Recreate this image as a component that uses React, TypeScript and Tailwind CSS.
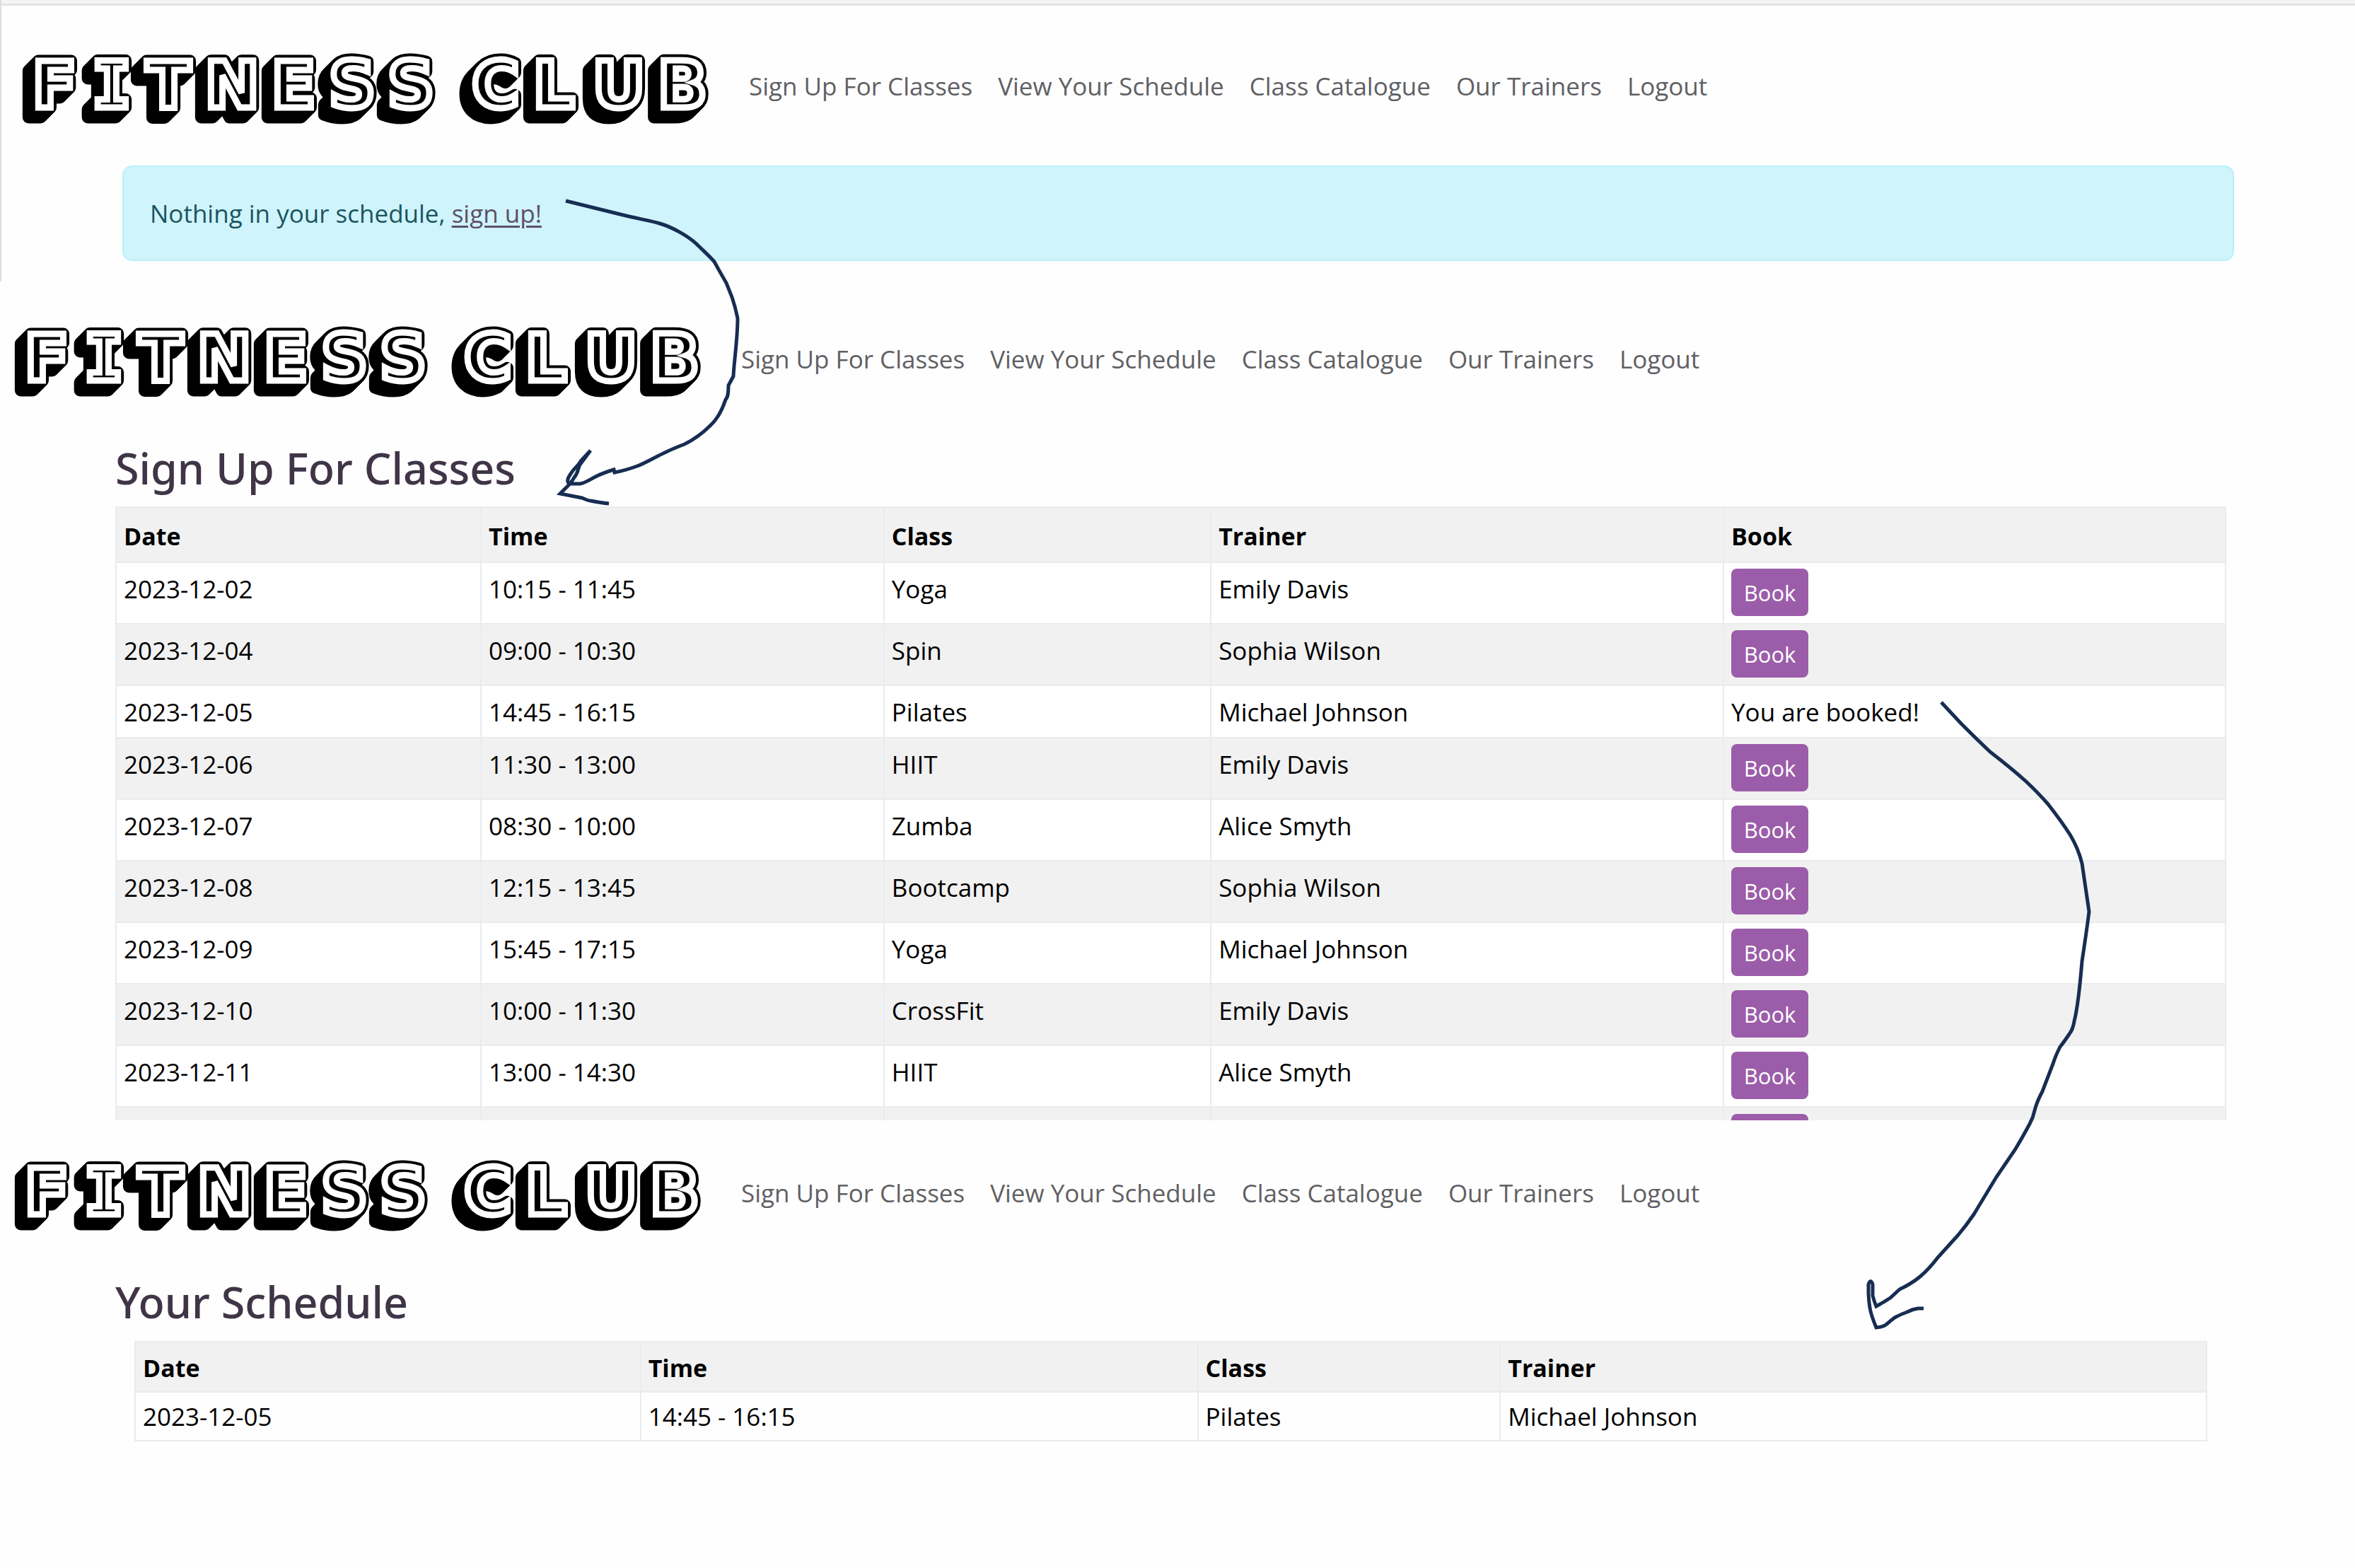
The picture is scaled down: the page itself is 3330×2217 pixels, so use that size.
import { useId } from "react";

const NAV_ITEMS = ["Sign Up For Classes", "View Your Schedule", "Class Catalogue", "Our Trainers", "Logout"];

type Session = { date: string; time: string; name: string; trainer: string; booked?: boolean };

const SESSIONS: Session[] = [
  { date: "2023-12-02", time: "10:15 - 11:45", name: "Yoga", trainer: "Emily Davis" },
  { date: "2023-12-04", time: "09:00 - 10:30", name: "Spin", trainer: "Sophia Wilson" },
  { date: "2023-12-05", time: "14:45 - 16:15", name: "Pilates", trainer: "Michael Johnson", booked: true },
  { date: "2023-12-06", time: "11:30 - 13:00", name: "HIIT", trainer: "Emily Davis" },
  { date: "2023-12-07", time: "08:30 - 10:00", name: "Zumba", trainer: "Alice Smyth" },
  { date: "2023-12-08", time: "12:15 - 13:45", name: "Bootcamp", trainer: "Sophia Wilson" },
  { date: "2023-12-09", time: "15:45 - 17:15", name: "Yoga", trainer: "Michael Johnson" },
  { date: "2023-12-10", time: "10:00 - 11:30", name: "CrossFit", trainer: "Emily Davis" },
  { date: "2023-12-11", time: "13:00 - 14:30", name: "HIIT", trainer: "Alice Smyth" },
];

// Block lettering with an inline stripe and a shade that falls to the lower left.
function Logo() {
  const id = useId();
  const shade = Array.from({ length: 15 }, (_, i) => i);
  return (
    <a href="#home" className="block shrink-0">
      <svg width="980" height="110" viewBox="0 0 980 110" className="block overflow-visible">
        <g fill="#000" stroke="#000" strokeWidth="17" strokeLinejoin="round">
          {shade.map((i) => (
            <use key={i} href={`#${id}`} x={-i} y={i} />
          ))}
        </g>
        <g fill="#000" stroke="#fff" strokeWidth="9" strokeLinejoin="miter">
          <text
            id={id}
            x="49 130 210 300 387 470 553 612 673 755 847 937"
            y="82"
            textAnchor="middle"
            fontFamily="'DejaVu Sans', sans-serif"
            fontWeight="700"
            fontSize="91"
          >
            F<tspan fontFamily="'DejaVu Sans Mono', monospace">I</tspan>TNESS CLUB
          </text>
        </g>
      </svg>
    </a>
  );
}

function Header() {
  return (
    <header className="flex items-center gap-[51px]">
      <Logo />
      <nav className="flex gap-[36px] pb-[6px] text-[#606064]">
        {NAV_ITEMS.map((item) => (
          <a key={item} href="#nav" className="whitespace-nowrap">
            {item}
          </a>
        ))}
      </nav>
    </header>
  );
}

const CELL = "border-2 border-[#e9ebef] px-[10px] text-left align-top";

function SignUpTable() {
  return (
    <table className="w-full table-fixed border-collapse text-black">
      <colgroup>
        <col className="w-[17.3%]" />
        <col className="w-[19.1%]" />
        <col className="w-[15.5%]" />
        <col className="w-[24.3%]" />
        <col />
      </colgroup>
      <thead>
        <tr className="h-[78px] bg-[#f1f1f1]">
          {["Date", "Time", "Class", "Trainer", "Book"].map((h) => (
            <th key={h} scope="col" className={`${CELL} border-b-0 pt-[15px] text-[34px] font-bold`}>
              {h}
            </th>
          ))}
        </tr>
      </thead>
      <tbody>
        {SESSIONS.map((s, i) => (
          <tr key={i} className={`${s.booked ? "h-[74px]" : "h-[87px]"} ${i % 2 ? "bg-[#f1f1f1]" : "bg-white"}`}>
            <td className={`${CELL} pt-[12px]`}>{s.date}</td>
            <td className={`${CELL} pt-[12px]`}>{s.time}</td>
            <td className={`${CELL} pt-[12px]`}>{s.name}</td>
            <td className={`${CELL} pt-[12px]`}>{s.trainer}</td>
            {s.booked ? (
              <td className={`${CELL} pt-[12px]`}>You are booked!</td>
            ) : (
              <td className={`${CELL} pt-[8px]`}>
                <button
                  type="button"
                  className="block h-[67px] w-[109px] rounded-[8px] bg-[#9b5da9] text-[31px] text-white"
                >
                  Book
                </button>
              </td>
            )}
          </tr>
        ))}
        <tr className="h-[18px] bg-[#f1f1f1]">
          <td className={`${CELL} border-b-0`} />
          <td className={`${CELL} border-b-0`} />
          <td className={`${CELL} border-b-0`} />
          <td className={`${CELL} border-b-0`} />
          <td className={`${CELL} border-b-0 pt-[9px]`}>
            <button
              type="button"
              aria-label="Book next class"
              className="block h-[9px] w-[109px] rounded-t-[8px] bg-[#9b5da9]"
            />
          </td>
        </tr>
      </tbody>
    </table>
  );
}

function ScheduleTable() {
  return (
    <table className="w-full table-fixed border-collapse text-black">
      <colgroup>
        <col className="w-[24.4%]" />
        <col className="w-[26.9%]" />
        <col className="w-[14.6%]" />
        <col />
      </colgroup>
      <thead>
        <tr className="h-[71px] bg-[#f1f1f1]">
          {["Date", "Time", "Class", "Trainer"].map((h) => (
            <th key={h} scope="col" className={`${CELL} border-b-0 pt-[11px] text-[34px] font-bold`}>
              {h}
            </th>
          ))}
        </tr>
      </thead>
      <tbody>
        <tr className="h-[69px]">
          {["2023-12-05", "14:45 - 16:15", "Pilates", "Michael Johnson"].map((v) => (
            <td key={v} className={`${CELL} pt-[9px]`}>
              {v}
            </td>
          ))}
        </tr>
      </tbody>
    </table>
  );
}

// Hand-drawn arrows that link one screen to the next.
function Arrows() {
  return (
    <svg
      aria-hidden="true"
      width="3330"
      height="2217"
      viewBox="0 0 3330 2217"
      fill="none"
      stroke="#172d52"
      strokeWidth="5"
      className="pointer-events-none absolute top-0 left-0 max-w-none"
    >
      <path d="M800 284L877 303C900 309 920 312 933 316C950 321 972 333 985 345C994 354 1003 362 1010 370Q1020 388 1027 400L1035 420Q1040 435 1043 450C1043 480 1038 510 1037 532L1030 545C1030 560 1028 563 1026 565C1020 583 1012 595 1004 602C992 614 980 622 968 628C955 633 948 636 940 640C925 647 912 655 901 659C890 663 880 666 869 668L868 664C858 667 848 671 842 674C834 678 828 683 820 684H805C800 680 804 674 809 667C812 662 818 658 821 652L835 637L820 657C817 662 818 668 812 675C809 680 807 683 804 686L792 698L823 704C828 706 832 708 835 708Q850 711 861 712" />
      <path d="M2745 993L2773 1023Q2794 1044 2814 1063Q2845 1087 2865 1105Q2883 1122 2896 1137Q2914 1160 2927 1180Q2939 1200 2944 1221L2954 1289Q2950 1320 2944 1359Q2939 1420 2933 1444Q2931 1456 2926 1462Q2918 1474 2913 1480Q2906 1494 2903 1504L2888 1543Q2880 1558 2877 1570Q2875 1580 2870 1589Q2861 1606 2849 1626L2823 1664L2791 1717Q2780 1733 2769 1746L2740 1778Q2728 1794 2715 1805Q2703 1815 2686 1823L2673 1835Q2664 1841 2653 1847Q2650 1840 2648 1832V1816Q2645 1807 2642 1816V1829Q2643 1850 2647 1861Q2650 1870 2653 1877Q2664 1876 2668 1872Q2675 1866 2679 1863Q2688 1858 2697 1855Q2704 1851 2712 1850H2720" />
    </svg>
  );
}

const HEADING = "font-['Noto_Sans','Open_Sans',sans-serif] text-[61px] leading-[70px] font-medium text-[#3f3547]";

export default function App() {
  return (
    <div className="relative min-h-screen overflow-hidden bg-[#fefefe] font-['Open_Sans','Noto_Sans',sans-serif] text-[35px] leading-[50px]">
      <section className="border-l-2 border-l-[#dedede] pb-[29px]">
        <div className="h-[8px] border-b-[3px] border-[#e2e2e2] bg-[#f4f4f4]" />
        <div className="pt-[62px] pl-[26px]">
          <Header />
        </div>
        <div
          role="alert"
          className="mt-[54px] mr-[171px] ml-[171px] flex h-[135px] items-center rounded-[14px] border-2 border-[#b8f0fb] bg-[#cff4fc] px-[37px] text-[#1b5560]"
        >
          <p>
            Nothing in your schedule,{" "}
            <a href="#signup" className="text-[#5e5066] underline decoration-3 underline-offset-4">
              sign up!
            </a>
          </p>
        </div>
      </section>

      <section className="pt-[58px]">
        <div className="pl-[17px]">
          <Header />
        </div>
        <div className="mt-[61px] mr-[182px] ml-[163px]">
          <h1 className={HEADING}>Sign Up For Classes</h1>
          <div className="mt-[19px] max-h-[868px] overflow-hidden">
            <SignUpTable />
          </div>
        </div>
      </section>

      <section className="pt-[51px]">
        <div className="pl-[17px]">
          <Header />
        </div>
        <div className="mt-[61px] mr-[182px] ml-[163px]">
          <h1 className={HEADING}>Your Schedule</h1>
          <div className="mt-[20px] px-[27px]">
            <ScheduleTable />
          </div>
        </div>
      </section>

      <Arrows />
    </div>
  );
}
